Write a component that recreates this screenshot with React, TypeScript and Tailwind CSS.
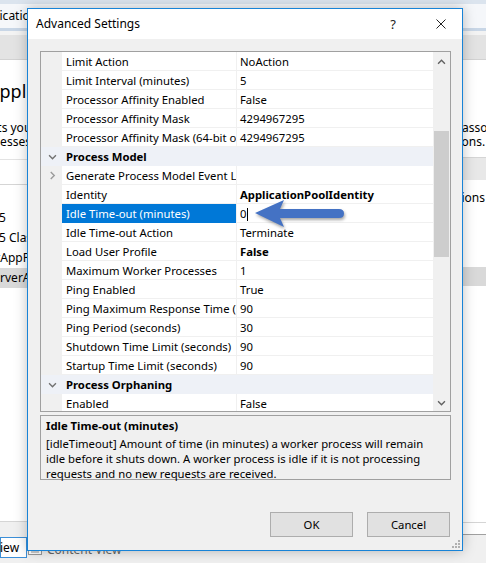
import React from 'react';

type Row =
  | { kind: 'cat'; label: string }
  | { kind: 'prop'; name: string; value: string; bold?: boolean; expand?: boolean; selected?: boolean };

const rows: Row[] = [
  { kind: 'prop', name: 'Limit Action', value: 'NoAction' },
  { kind: 'prop', name: 'Limit Interval (minutes)', value: '5' },
  { kind: 'prop', name: 'Processor Affinity Enabled', value: 'False' },
  { kind: 'prop', name: 'Processor Affinity Mask', value: '4294967295' },
  { kind: 'prop', name: 'Processor Affinity Mask (64-bit option)', value: '4294967295' },
  { kind: 'cat', label: 'Process Model' },
  { kind: 'prop', name: 'Generate Process Model Event Log Entry', value: '', expand: true },
  { kind: 'prop', name: 'Identity', value: 'ApplicationPoolIdentity', bold: true },
  { kind: 'prop', name: 'Idle Time-out (minutes)', value: '0', selected: true },
  { kind: 'prop', name: 'Idle Time-out Action', value: 'Terminate' },
  { kind: 'prop', name: 'Load User Profile', value: 'False', bold: true },
  { kind: 'prop', name: 'Maximum Worker Processes', value: '1' },
  { kind: 'prop', name: 'Ping Enabled', value: 'True' },
  { kind: 'prop', name: 'Ping Maximum Response Time (seconds)', value: '90' },
  { kind: 'prop', name: 'Ping Period (seconds)', value: '30' },
  { kind: 'prop', name: 'Shutdown Time Limit (seconds)', value: '90' },
  { kind: 'prop', name: 'Startup Time Limit (seconds)', value: '90' },
  { kind: 'cat', label: 'Process Orphaning' },
  { kind: 'prop', name: 'Enabled', value: 'False' },
];

function Chevron({ dir, className }: { dir: 'down' | 'right' | 'up'; className?: string }) {
  const d = dir === 'down' ? 'M1 1.5 L5 5.5 L9 1.5' : dir === 'up' ? 'M1 5.5 L5 1.5 L9 5.5' : 'M2 0.5 L6 4.5 L2 8.5';
  const box = dir === 'right' ? '0 0 8 9' : '0 0 10 7';
  return (
    <svg viewBox={box} className={className} fill="none" stroke="currentColor" strokeWidth="1.6">
      <path d={d} />
    </svg>
  );
}

function Background() {
  return (
    <div className="flex h-[563px] w-[486px] flex-col bg-white text-[12px] text-black">
      <div className="h-[4px] bg-[#dbe4ee]" />
      <div className="flex h-[24px] items-center bg-[#f5f7fa]">
        <span className="ml-[-26px] whitespace-nowrap">Application Pools</span>
      </div>
      <div className="h-[3px] bg-[#c8d6e6]" />
      <div className="h-[4px] bg-[#f3f3f3]" />
      <div className="h-[25px] border-b border-[#d2d2d2] bg-[#e3e3e3]" />

      <div className="flex flex-1">
        {/* left strip */}
        <div className="flex w-[27px] flex-col overflow-hidden whitespace-nowrap">
          <div className="mt-[19px] text-[18px] leading-[24px]">
            <span className="ml-[-12px]">Application Pools</span>
          </div>
          <div className="mt-[18px] leading-[14px]">
            <div>
              <span className="ml-[-70px]">This page lets you view</span>
            </div>
            <div>
              <span className="ml-[-25px]">processes,</span>
            </div>
          </div>
          <div className="mt-[10px] h-[25px] border-t border-[#e3e3e3]" />
          <div className="h-[24px] border-t border-[#d5d5d5]" />
          <div className="h-[20px] leading-[20px]">
            <span className="ml-[-46px]">.NET v4.5</span>
          </div>
          <div className="h-[20px] leading-[20px]">
            <span className="ml-[-46px]">.NET v4.5 Classic</span>
          </div>
          <div className="h-[20px] leading-[20px]">
            <span className="ml-[-41px]">DefaultAppPool</span>
          </div>
          <div className="h-[20px] bg-[#d9d9d9] leading-[20px]">
            <span className="ml-[-78px]">SharePoint ServerApp</span>
          </div>
          <div className="flex-1 border-b border-[#d5d5d5]" />
          <div className="h-[15px] bg-[#f0f0f0]" />
          <div className="flex h-[21px] items-center border border-[#3c8fd8] bg-white">
            <span className="ml-[-60px]">Features View</span>
          </div>
          <div className="h-[5px] bg-[#f0f0f0]" />
        </div>

        {/* middle (mostly under the dialog) */}
        <div className="flex flex-1 flex-col">
          <div className="flex-1" />
          <div className="h-[15px] border-t border-[#d5d5d5] bg-white" />
          <div className="flex h-[26px] items-start gap-[5px] bg-[#f0f0f0] pl-[1px] pt-[5px]">
            <svg viewBox="0 0 14 10" className="mt-[4px] h-[10px] w-[14px]">
              <rect x="0.5" y="0.5" width="13" height="9" fill="#fff" stroke="#9a9a9a" />
              <path d="M3 3h8M3 5h8M3 7h8" stroke="#9a9a9a" />
            </svg>
            <span className="text-[#666]">Content View</span>
          </div>
          <div className="h-[1px] bg-[#f0f0f0]" />
        </div>

        {/* right strip */}
        <div className="flex w-[24px] flex-col overflow-hidden whitespace-nowrap">
          <div className="mt-[61px] leading-[14px]">
            <div>associated</div>
            <div>
              <span className="ml-[-48px]">applications.</span>
            </div>
          </div>
          <div className="mt-[8px] h-[23px] border-t border-[#d5d5d5] bg-[#e8e8e8]" />
          <div className="mt-[8px] h-[20px] leading-[20px]">
            <span className="ml-[-46px]">Applications</span>
          </div>
          <div className="h-[59px]" />
          <div className="h-[19px] bg-[#d9d9d9]" />
          <div className="flex-1 border-b border-[#d5d5d5]" />
          <div className="h-[12px] border-b border-[#a0a0a0] bg-white" />
          <div className="h-[28px] bg-[#f0f0f0]" />
        </div>
      </div>
    </div>
  );
}

function PropertyGrid() {
  return (
    <div className="flex h-[361px] border border-[#a0a0a0] bg-white">
      <div className="flex-1 overflow-hidden">
        {rows.map((r, i) =>
          r.kind === 'cat' ? (
            <div key={i} className="flex h-[19px] items-center bg-[#eef1f7]">
              <div className="flex w-[21px] justify-center">
                <Chevron dir="down" className="ml-[1px] h-[6px] w-[9px] text-[#707070]" />
              </div>
              <span className="pl-[4px] pt-[1px] font-bold">{r.label}</span>
            </div>
          ) : (
            <div key={i} className="flex h-[19px]">
              <div className="flex w-[21px] items-center justify-center bg-[#f0f0f0]">
                {r.expand && <Chevron dir="right" className="ml-[1px] h-[9px] w-[7px] text-[#9a9a9a]" />}
              </div>
              <div
                className={`flex w-[174px] items-center overflow-hidden whitespace-nowrap border-b pl-[4px] pt-[2px] ${
                  r.selected ? 'border-[#0078d7] bg-[#0078d7] text-white' : 'border-[#f0f0f0]'
                }`}
              >
                {r.name}
              </div>
              <div className="w-[1px] bg-[#f0f0f0]" />
              <div
                className={`flex flex-1 items-center whitespace-nowrap border-b border-[#f0f0f0] pl-[3px] pt-[2px] ${
                  r.bold ? 'font-bold' : ''
                }`}
              >
                {r.value}
                {r.selected && <span className="ml-[1px] h-[13px] w-[1px] bg-black" />}
              </div>
            </div>
          )
        )}
      </div>
      <div className="flex w-[17px] flex-col items-center bg-[#f0f0f0]">
        <Chevron dir="up" className="mt-[7px] h-[6px] w-[9px] text-[#606060]" />
        <div className="mt-[66px] h-[126px] w-[15px] bg-[#cdcdcd]" />
        <div className="flex-1" />
        <Chevron dir="down" className="mb-[5px] h-[6px] w-[9px] text-[#606060]" />
      </div>
    </div>
  );
}

function Dialog() {
  return (
    <div className="absolute left-[27px] top-[8px] flex h-[543px] w-[436px] flex-col border border-[#1883d7] bg-[#f0f0f0] text-[11.3px] leading-none text-black shadow-[0_0_12px_rgba(0,0,0,0.25)]">
      <div className="flex h-[30px] items-center bg-white pl-[8px]">
        <span className="text-[12px]">Advanced Settings</span>
        <span className="ml-auto mr-[40px] text-[13px] text-[#222]">?</span>
        <svg viewBox="0 0 10 10" className="mr-[16px] h-[10px] w-[10px]" stroke="#222" strokeWidth="1">
          <path d="M0.5 0.5 L9.5 9.5 M9.5 0.5 L0.5 9.5" />
        </svg>
      </div>
      <div className="flex flex-1 flex-col pl-[12px] pr-[11px] pt-[12px]">
        <PropertyGrid />
        <div className="mt-[3px] h-[65px] border border-[#a0a0a0] px-[5px] pt-[2px]">
          <div className="font-bold leading-[15px]">Idle Time-out (minutes)</div>
          <div className="mt-[3px] whitespace-nowrap leading-[15px]">
            [idleTimeout] Amount of time (in minutes) a worker process will remain
            <br />
            idle before it shuts down. A worker process is idle if it is not processing
            <br />
            requests and no new requests are received.
          </div>
        </div>
        <div className="mt-[32px] flex justify-end gap-[14px] pr-[1px]">
          <button className="h-[25px] w-[83px] border border-[#adadad] bg-[#e1e1e1] text-[11.3px]">OK</button>
          <button className="h-[25px] w-[83px] border border-[#adadad] bg-[#e1e1e1] text-[11.3px]">Cancel</button>
        </div>
        <div className="flex flex-1 items-end justify-end pb-[2px]">
          <svg viewBox="0 0 8 8" className="mr-[-9px] h-[8px] w-[8px]" fill="#b0b0b0">
            <rect x="6" y="0" width="2" height="2" />
            <rect x="3" y="3" width="2" height="2" />
            <rect x="6" y="3" width="2" height="2" />
            <rect x="0" y="6" width="2" height="2" />
            <rect x="3" y="6" width="2" height="2" />
            <rect x="6" y="6" width="2" height="2" />
          </svg>
        </div>
      </div>
    </div>
  );
}

export default function App() {
  return (
    <div className="relative h-[563px] w-[486px] overflow-hidden font-['Noto_Sans',sans-serif]">
      <Background />
      <Dialog />
      <svg
        viewBox="0 0 100 40"
        className="absolute left-[250px] top-[195px] h-[40px] w-[100px] drop-shadow-[1px_2px_1.5px_rgba(0,0,0,0.35)]"
      >
        <path d="M5 18 L34 5 L30 14 L89 14 Q94 14 94 18.5 Q94 23 89 23 L30 23 L34 32 Z" fill="#4472c4" />
      </svg>
    </div>
  );
}
